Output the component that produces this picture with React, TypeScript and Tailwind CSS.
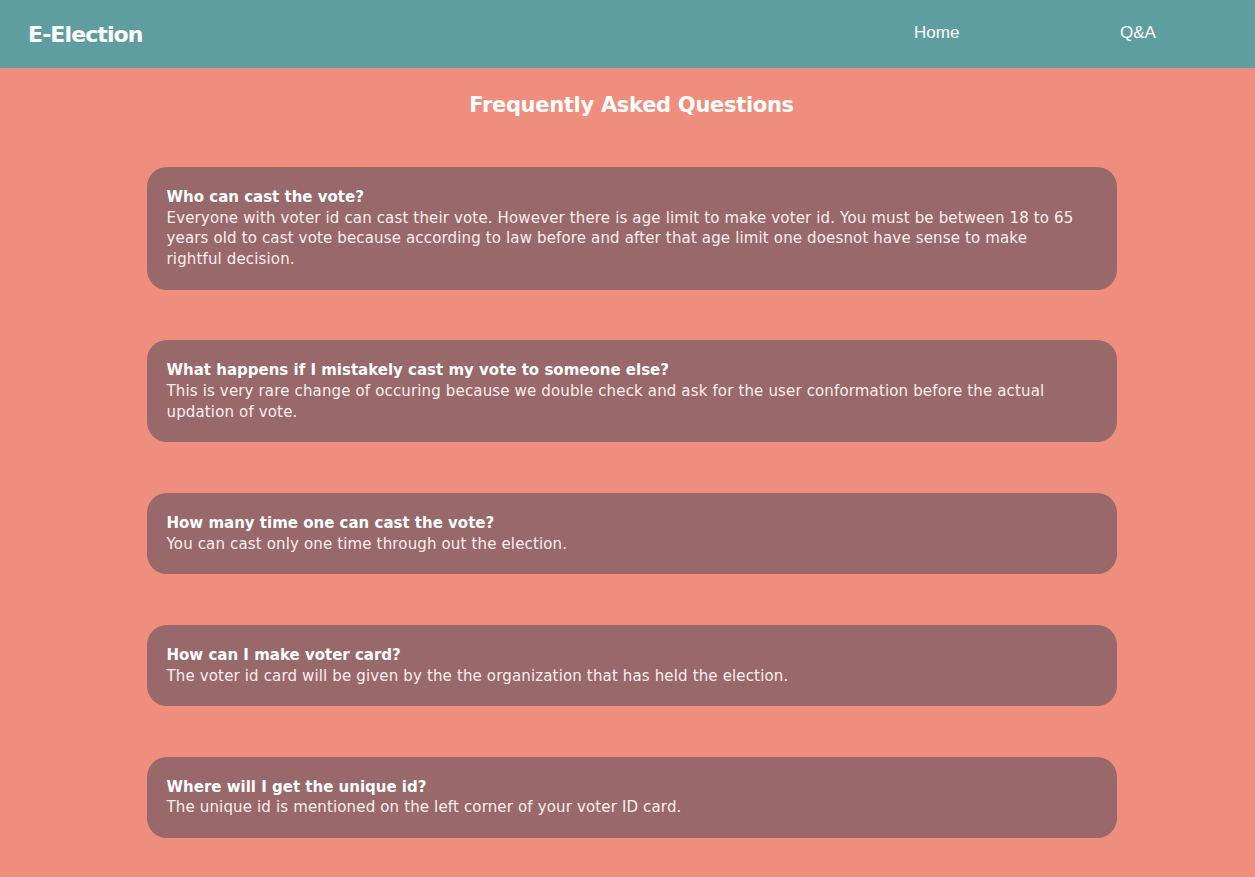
const faqs = [
  {
    q: "Who can cast the vote?",
    a: "Everyone with voter id can cast their vote. However there is age limit to make voter id. You must be between 18 to 65 years old to cast vote because according to law before and after that age limit one doesnot have sense to make\nrightful decision.",
  },
  {
    q: "What happens if I mistakely cast my vote to someone else?",
    a: "This is very rare change of occuring because we double check and ask for the user conformation before the actual updation of vote.",
  },
  {
    q: "How many time one can cast the vote?",
    a: "You can cast only one time through out the election.",
  },
  {
    q: "How can I make voter card?",
    a: "The voter id card will be given by the the organization that has held the election.",
  },
  {
    q: "Where will I get the unique id?",
    a: "The unique id is mentioned on the left corner of your voter ID card.",
  },
];

function Navbar() {
  return (
    <nav className="h-[68px] bg-[#5f9ea0] flex items-center text-white">
      <h1 className="ml-[28px] text-[22px] font-bold font-['DejaVu_Sans',sans-serif] tracking-[-0.9px]">E-Election</h1>
      <ul className="ml-auto flex items-center font-['Liberation_Sans',Arial,sans-serif] text-[17px] -mt-[3px]">
        <li className="w-[206px]">Home</li>
        <li className="w-[135px]">Q&amp;A</li>
      </ul>
    </nav>
  );
}

export default function App() {
  return (
    <div className="min-h-[877px] bg-[#f08e7e] font-['DejaVu_Sans',sans-serif] text-white">
      <Navbar />
      <div className="pl-[8px]">
        <h2 className="text-center text-[21px] font-bold leading-[30px] pt-[22px] tracking-[-0.3px]">Frequently Asked Questions</h2>
        <div className="w-[970px] mx-auto mt-[47px] flex flex-col gap-[50.5px] pb-[40px]">
          {faqs.map((f) => (
            <div key={f.q} className="bg-[#98686a] rounded-[20px] p-[20px] text-[15px] leading-[20.7px] tracking-[0.15px] text-[#fbeeee]">
              <p className="font-bold text-white tracking-normal">{f.q}</p>
              <p className="whitespace-pre-line">{f.a}</p>
            </div>
          ))}
        </div>
      </div>
    </div>
  );
}
